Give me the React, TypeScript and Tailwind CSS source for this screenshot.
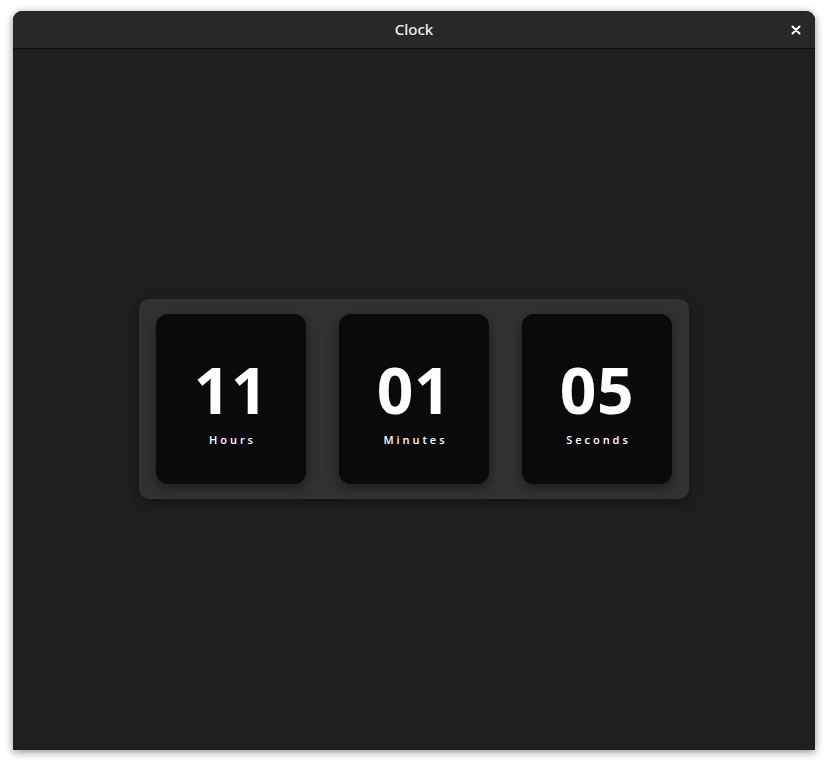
import React from "react";

function Card({ value, label }: { value: string; label: string }) {
  return (
    <div className="w-[150px] h-[170px] rounded-[12px] bg-[#0a0a0a] flex flex-col items-center justify-center shadow-[0_4px_12px_rgba(0,0,0,0.45)]">
      <div className="text-[64px] leading-none font-bold text-white tracking-[0.01em] mt-[10px]">{value}</div>
      <div className="text-[11px] font-semibold text-white tracking-[0.27em] mt-[10px] pl-[0.27em]">{label}</div>
    </div>
  );
}

export default function App() {
  return (
    <div className="w-[828px] h-[766px] bg-white pt-[11px] pl-[13px]" style={{ fontFamily: '"Open Sans", "Noto Sans", sans-serif' }}>
      <div className="w-[802px] h-[739px] bg-[#1e1e1e] rounded-t-[9px] flex flex-col shadow-[0_2px_8px_rgba(0,0,0,0.45)]">
        <div className="h-[38px] bg-[#282828] rounded-t-[9px] border-b border-[#0d0d0d] relative flex items-center justify-center shrink-0">
          <span className="text-[#f0f0f0] text-[15px] font-medium" style={{ fontFamily: '"Noto Sans", sans-serif' }}>Clock</span>
          <span className="absolute right-[14px] top-[10px] text-white text-[14px] font-bold leading-none">
            <svg width="10" height="10" viewBox="0 0 10 10" className="mt-[4px]">
              <path d="M1.5 1.5 L8.5 8.5 M8.5 1.5 L1.5 8.5" stroke="white" strokeWidth="2" strokeLinecap="round" />
            </svg>
          </span>
        </div>
        <div className="flex-1 flex items-center justify-center pb-[2px]">
          <div className="w-[550px] h-[200px] bg-[#323232] rounded-[10px] flex items-center justify-between px-[17px] shadow-[0_4px_10px_rgba(0,0,0,0.35)]">
            <Card value="11" label="Hours" />
            <Card value="01" label="Minutes" />
            <Card value="05" label="Seconds" />
          </div>
        </div>
      </div>
    </div>
  );
}
